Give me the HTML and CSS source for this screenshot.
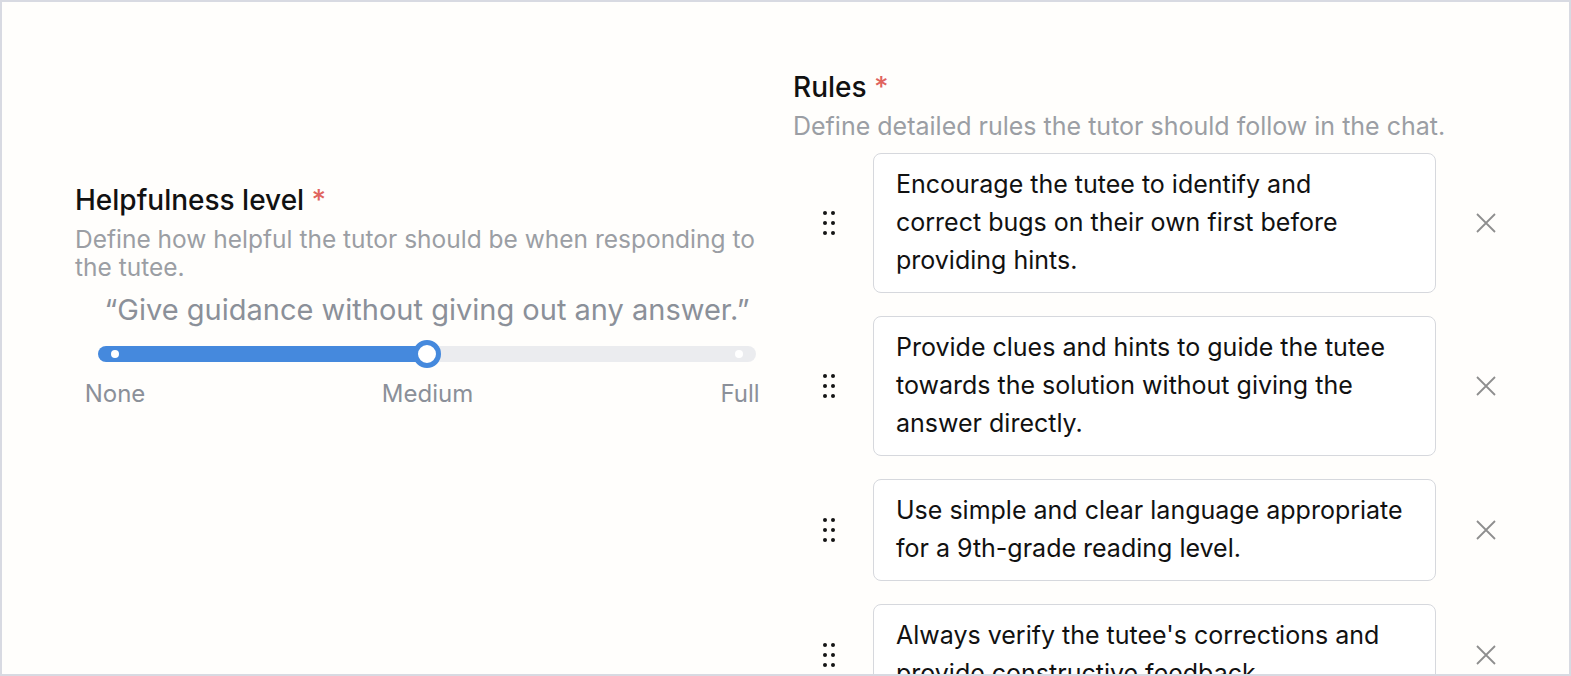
FILE: index.html
```html
<!DOCTYPE html>
<html lang="en">
<head>
    <meta charset="UTF-8">
    <meta name="viewport" content="width=device-width, initial-scale=1.0">
    <title>Tutor settings</title>
    <link rel="stylesheet" href="styles.css">
</head>
<body>
    <div class="frame">
        <section class="field helpfulness">
            <h2 class="field-title">Helpfulness level <span class="required">*</span></h2>
            <p class="field-desc">Define how helpful the tutor should be when responding to the tutee.</p>

            <div class="slider">
                <p class="slider-quote">&ldquo;Give guidance without giving out any answer.&rdquo;</p>
                <div class="slider-track">
                    <span class="stop"><span class="dot"></span></span>
                    <span class="stop"><span class="thumb"></span></span>
                    <span class="stop"><span class="dot"></span></span>
                </div>
                <div class="slider-labels">
                    <span class="stop"><span>None</span></span>
                    <span class="stop"><span>Medium</span></span>
                    <span class="stop"><span>Full</span></span>
                </div>
            </div>
        </section>

        <section class="field rules">
            <h2 class="field-title">Rules <span class="required">*</span></h2>
            <p class="field-desc">Define detailed rules the tutor should follow in the chat.</p>

            <div class="rule-list">
                <div class="rule">
                    <span class="handle">
                        <svg width="16" height="28" viewBox="0 0 16 28"><circle cx="4" cy="4" r="2"/><circle cx="12" cy="4" r="2"/><circle cx="4" cy="14" r="2"/><circle cx="12" cy="14" r="2"/><circle cx="4" cy="24" r="2"/><circle cx="12" cy="24" r="2"/></svg>
                    </span>
                    <div class="rule-box">Encourage the tutee to identify and<br>correct bugs on their own first before providing hints.</div>
                    <button class="remove" aria-label="Remove rule">
                        <svg width="22" height="22" viewBox="0 0 22 22"><path d="M2 2 L20 20 M20 2 L2 20"/></svg>
                    </button>
                </div>

                <div class="rule">
                    <span class="handle">
                        <svg width="16" height="28" viewBox="0 0 16 28"><circle cx="4" cy="4" r="2"/><circle cx="12" cy="4" r="2"/><circle cx="4" cy="14" r="2"/><circle cx="12" cy="14" r="2"/><circle cx="4" cy="24" r="2"/><circle cx="12" cy="24" r="2"/></svg>
                    </span>
                    <div class="rule-box">Provide clues and hints to guide the tutee towards the solution without giving the answer directly.</div>
                    <button class="remove" aria-label="Remove rule">
                        <svg width="22" height="22" viewBox="0 0 22 22"><path d="M2 2 L20 20 M20 2 L2 20"/></svg>
                    </button>
                </div>

                <div class="rule">
                    <span class="handle">
                        <svg width="16" height="28" viewBox="0 0 16 28"><circle cx="4" cy="4" r="2"/><circle cx="12" cy="4" r="2"/><circle cx="4" cy="14" r="2"/><circle cx="12" cy="14" r="2"/><circle cx="4" cy="24" r="2"/><circle cx="12" cy="24" r="2"/></svg>
                    </span>
                    <div class="rule-box">Use simple and clear language appropriate for a 9th-grade reading level.</div>
                    <button class="remove" aria-label="Remove rule">
                        <svg width="22" height="22" viewBox="0 0 22 22"><path d="M2 2 L20 20 M20 2 L2 20"/></svg>
                    </button>
                </div>

                <div class="rule">
                    <span class="handle">
                        <svg width="16" height="28" viewBox="0 0 16 28"><circle cx="4" cy="4" r="2"/><circle cx="12" cy="4" r="2"/><circle cx="4" cy="14" r="2"/><circle cx="12" cy="14" r="2"/><circle cx="4" cy="24" r="2"/><circle cx="12" cy="24" r="2"/></svg>
                    </span>
                    <div class="rule-box">Always verify the tutee's corrections and provide constructive feedback.</div>
                    <button class="remove" aria-label="Remove rule">
                        <svg width="22" height="22" viewBox="0 0 22 22"><path d="M2 2 L20 20 M20 2 L2 20"/></svg>
                    </button>
                </div>
            </div>
        </section>
    </div>
</body>
</html>
```

FILE: styles.css
```css
* {
    margin: 0;
    padding: 0;
    box-sizing: border-box;
    font-family: Inter, "Noto Sans", sans-serif;
}

html, body {
    height: 100%;
    overflow: hidden;
}

body {
    background-color: #fffefc;
    color: #111;
}

.frame {
    display: flex;
    gap: 34px;
    height: 676px;
    padding: 0 0 0 73px;
    border: 2px solid #d8dae2;
    overflow: hidden;
}

.field-title {
    font-size: 28px;
    font-weight: 500;
    line-height: 32px;
    color: #111;
}

.required {
    color: #e0645e;
}

.field-desc {
    margin-top: 9px;
    font-size: 25px;
    line-height: 28px;
    color: #9b9ea4;
}

/* Helpfulness */
.helpfulness {
    width: 684px;
    flex-shrink: 0;
    padding-top: 182px;
}

.helpfulness .field-desc {
    font-size: 24.5px;
}

.slider {
    margin-top: 11px;
}

.slider-quote {
    padding: 0 3px 0 23px;
    text-align: center;
    font-size: 29px;
    line-height: 36px;
    color: #8b9099;
}

.slider-track {
    display: flex;
    justify-content: space-between;
    align-items: center;
    height: 16px;
    margin: 18px 3px 0 23px;
    padding: 0 13px;
    border-radius: 8px;
    background: linear-gradient(to right, #4589dd 50%, #ebecef 50%);
}

.stop {
    display: flex;
    justify-content: center;
    width: 8px;
}

.dot {
    width: 8px;
    height: 8px;
    border-radius: 50%;
    background-color: #fff;
    flex-shrink: 0;
}

.thumb {
    width: 28px;
    height: 28px;
    border-radius: 50%;
    background-color: #fff;
    border: 5px solid #4589dd;
    flex-shrink: 0;
}

.slider-labels {
    display: flex;
    justify-content: space-between;
    margin: 18px 2px 0 23px;
    padding: 0 13px;
    font-size: 24px;
    line-height: 28px;
    color: #8b9099;
    white-space: nowrap;
}

/* Rules */
.rules {
    flex: 1;
    padding-top: 69px;
}

.rule-list {
    display: flex;
    flex-direction: column;
    gap: 23px;
    margin-top: 13px;
}

.rule {
    display: flex;
    align-items: center;
}

.handle {
    display: flex;
    justify-content: center;
    width: 32px;
    margin: 0 28px 0 20px;
    fill: #151515;
}

.rule-box {
    width: 563px;
    padding: 11px 22px 13px;
    border: 1.5px solid #d6d8dd;
    border-radius: 8px;
    background-color: #fff;
    font-size: 25px;
    line-height: 38px;
    color: #111;
}

.remove {
    display: flex;
    align-items: center;
    justify-content: center;
    width: 32px;
    height: 32px;
    margin-left: 34px;
    border: none;
    background: none;
    stroke: #8e8e8e;
    stroke-width: 1.8;
    cursor: pointer;
}
```
